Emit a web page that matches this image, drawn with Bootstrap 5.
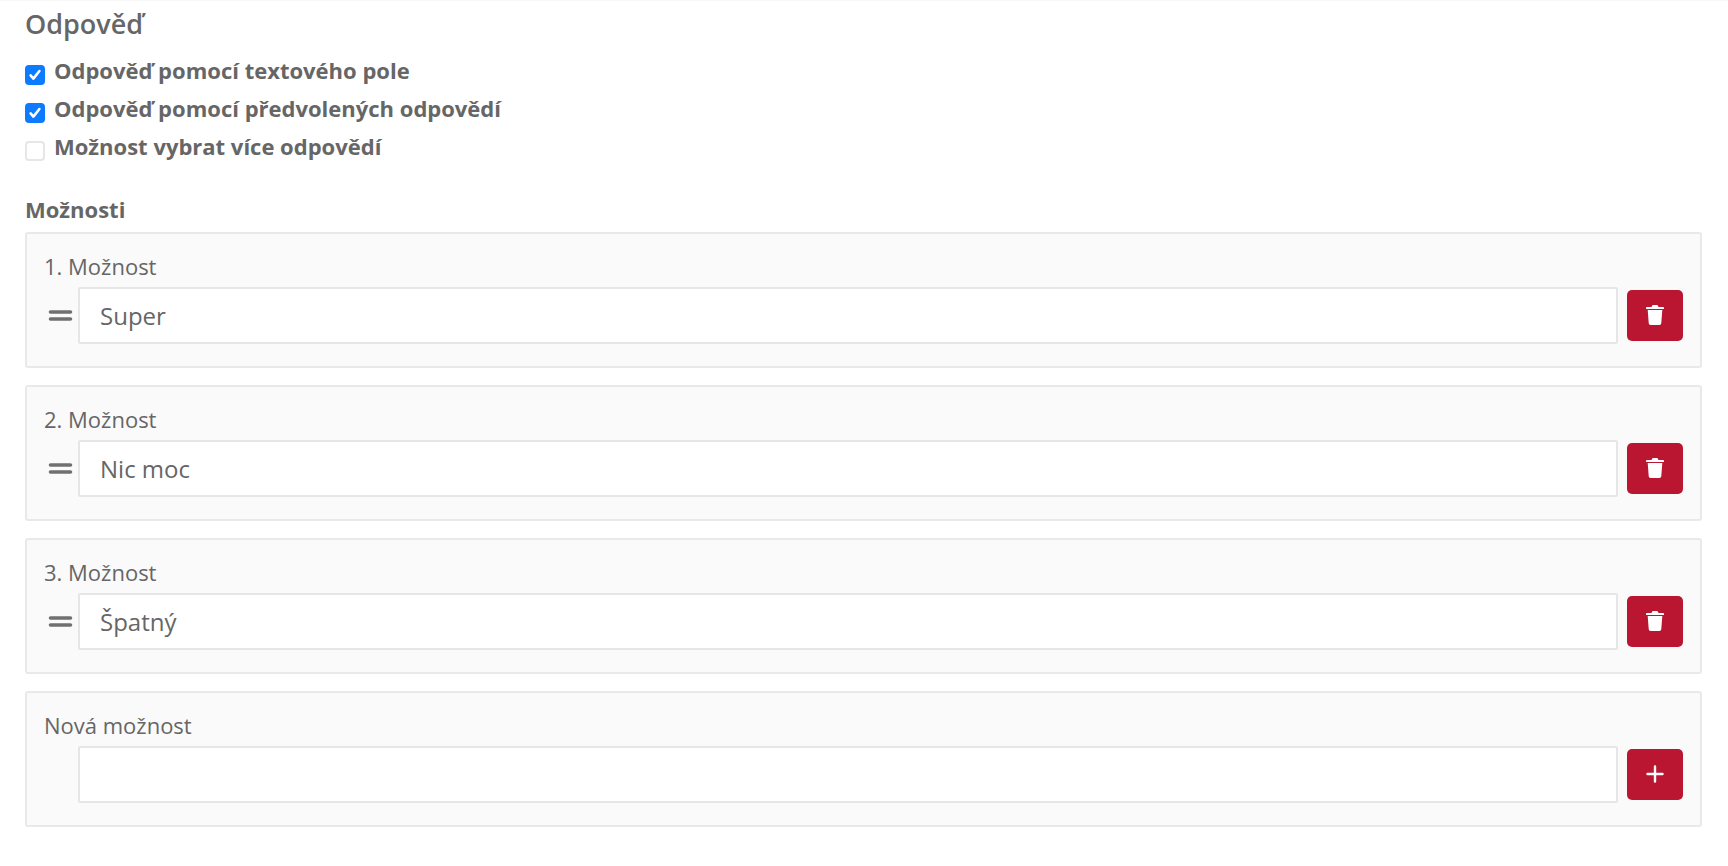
<!DOCTYPE html>
<html lang="cs">
<head>
    <meta charset="UTF-8">
    <title>Odpověď</title>
    <link rel="stylesheet" href="https://cdn.jsdelivr.net/npm/bootstrap@5.3.3/dist/css/bootstrap.min.css">
<style>
    body {
        background: #fff;
        color: #666;
        font-family: "Open Sans", sans-serif;
        font-size: 22px;
        line-height: 30px;
        border-top: 1px solid #f7f7f7;
    }
    .obsah {
        padding: 6px 26px 0 25px;
    }
    .nadpis {
        font-size: 27px;
        font-weight: 600;
        line-height: 34px;
        margin: 0 0 14px;
        color: #666;
    }
    .volba {
        display: flex;
        align-items: flex-start;
        gap: 9px;
        height: 38px;
        margin: 0;
        font-weight: 700;
        font-size: 22px;
        line-height: 30px;
    }
    .volba .form-check-input {
        width: 20px;
        height: 20px;
        margin: 10px 0 0;
        border: 2px solid #e6e6e6;
        border-radius: 4px;
        flex: none;
    }
    .volba .form-check-input:checked {
        background-color: #0d7bff;
        border-color: #0d7bff;
        background-size: 100% 100%;
        background-image: url("data:image/svg+xml,%3csvg xmlns='http://www.w3.org/2000/svg' viewBox='0 0 20 20'%3e%3cpath fill='none' stroke='%23fff' stroke-linecap='round' stroke-linejoin='round' stroke-width='3.2' d='M4.500 10.500l3.500 4 7.500-9.500'/%3e%3c/svg%3e");
    }
    .podnadpis {
        font-weight: 700;
        font-size: 22px;
        line-height: 30px;
        margin: 25px 0 8px;
    }
    .moznost {
        background: #fafafa;
        border: 2px solid #e9e9e9;
        border-radius: 3px;
        padding: 17px 17px 22px;
        margin-bottom: 17px;
    }
    .moznost-nazev {
        font-size: 22px;
        line-height: 30px;
        margin-bottom: 6px;
    }
    .uchop {
        width: 25px;
        height: 11px;
        margin-left: 4px;
        margin-right: 5px;
        flex: none;
    }
    .uchop-prazdny {
        width: 34px;
        flex: none;
    }
    .pole {
        height: 57px;
        border: 2px solid #e6e6e6;
        border-radius: 2px;
        padding: 0 20px;
        font-size: 24px;
        color: #666;
        background: #fff;
    }
    .tlacitko {
        width: 56px;
        height: 51px;
        padding: 0;
        flex: none;
        margin-left: 9px;
        background: #ba1531;
        border: 0;
        border-radius: 5px;
        display: flex;
        align-items: center;
        justify-content: center;
    }
    .tlacitko:hover {
        background: #a01029;
    }
    .kos {
        margin-bottom: 3px;
    }
    .plus {
        margin-bottom: 2px;
    }
</style>
</head>
<body>
    <div class="obsah">
        <h2 class="nadpis">Odpověď</h2>
        <label class="volba"><input class="form-check-input" type="checkbox" checked>Odpověď pomocí textového pole</label>
        <label class="volba"><input class="form-check-input" type="checkbox" checked>Odpověď pomocí předvolených odpovědí</label>
        <label class="volba"><input class="form-check-input" type="checkbox">Možnost vybrat více odpovědí</label>

        <div class="podnadpis">Možnosti</div>

        <div class="moznost">
            <div class="moznost-nazev">1. Možnost</div>
            <div class="d-flex align-items-center">
                <svg class="uchop" viewBox="0 0 25 11"><path d="M2.500 2h20M2.500 9h20" stroke="#707070" stroke-width="3.600" stroke-linecap="round"/></svg>
                <input type="text" class="form-control pole" value="Super">
                <button type="button" class="btn tlacitko"><svg class="kos" width="18" height="21" viewBox="0 0 18 21"><path d="M0 4.200c0-.7.400-1.200 1-1.200h4.600c.2-1.400 1-2 2-2h2.800c1 0 1.800.6 2 2H17c.6 0 1 .5 1 1.200V5H0zM1.700 6h14.600l-1 13c-.1 1.200-.8 2-2 2H4.700c-1.200 0-1.900-.8-2-2z" fill="#fff"/></svg></button>
            </div>
        </div>

        <div class="moznost">
            <div class="moznost-nazev">2. Možnost</div>
            <div class="d-flex align-items-center">
                <svg class="uchop" viewBox="0 0 25 11"><path d="M2.500 2h20M2.500 9h20" stroke="#707070" stroke-width="3.600" stroke-linecap="round"/></svg>
                <input type="text" class="form-control pole" value="Nic moc">
                <button type="button" class="btn tlacitko"><svg class="kos" width="18" height="21" viewBox="0 0 18 21"><path d="M0 4.200c0-.7.400-1.200 1-1.200h4.600c.2-1.400 1-2 2-2h2.800c1 0 1.800.6 2 2H17c.6 0 1 .5 1 1.200V5H0zM1.700 6h14.600l-1 13c-.1 1.200-.8 2-2 2H4.700c-1.200 0-1.900-.8-2-2z" fill="#fff"/></svg></button>
            </div>
        </div>

        <div class="moznost">
            <div class="moznost-nazev">3. Možnost</div>
            <div class="d-flex align-items-center">
                <svg class="uchop" viewBox="0 0 25 11"><path d="M2.500 2h20M2.500 9h20" stroke="#707070" stroke-width="3.600" stroke-linecap="round"/></svg>
                <input type="text" class="form-control pole" value="Špatný">
                <button type="button" class="btn tlacitko"><svg class="kos" width="18" height="21" viewBox="0 0 18 21"><path d="M0 4.200c0-.7.400-1.200 1-1.200h4.600c.2-1.400 1-2 2-2h2.800c1 0 1.800.6 2 2H17c.6 0 1 .5 1 1.200V5H0zM1.700 6h14.600l-1 13c-.1 1.200-.8 2-2 2H4.700c-1.200 0-1.900-.8-2-2z" fill="#fff"/></svg></button>
            </div>
        </div>

        <div class="moznost">
            <div class="moznost-nazev">Nová možnost</div>
            <div class="d-flex align-items-center">
                <span class="uchop-prazdny"></span>
                <input type="text" class="form-control pole">
                <button type="button" class="btn tlacitko"><svg class="plus" width="18" height="18" viewBox="0 0 18 18"><path d="M9 1.500v15M1.500 9h15" stroke="#fff" stroke-width="2.400" stroke-linecap="round"/></svg></button>
            </div>
        </div>
    </div>
    <script src="https://cdn.jsdelivr.net/npm/bootstrap@5.3.3/dist/js/bootstrap.bundle.min.js"></script>
</body>
</html>
